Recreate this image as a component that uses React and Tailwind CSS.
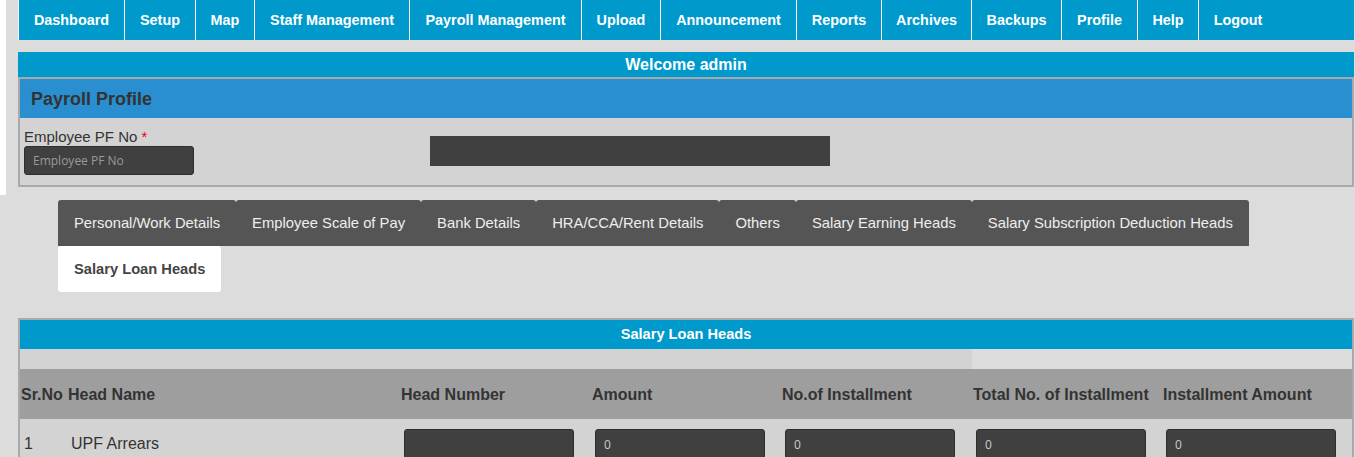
export default function App() {
  const nav = [
    { n: "Dashboard", w: "w-[106px]" },
    { n: "Setup", w: "w-[71px]" },
    { n: "Map", w: "w-[59px]" },
    { n: "Staff Management", w: "w-[155px]" },
    { n: "Payroll Management", w: "w-[172px]" },
    { n: "Upload", w: "w-[79px]" },
    { n: "Announcement", w: "w-[136px]" },
    { n: "Reports", w: "w-[85px]" },
    { n: "Archives", w: "w-[90px]" },
    { n: "Backups", w: "w-[90px]" },
    { n: "Profile", w: "w-[76px]" },
    { n: "Help", w: "w-[61px]" },
    { n: "Logout", w: "w-[79px]" },
  ];
  const tabs = [
    "Personal/Work Details",
    "Employee Scale of Pay",
    "Bank Details",
    "HRA/CCA/Rent Details",
    "Others",
    "Salary Earning Heads",
    "Salary Subscription Deduction Heads",
  ];
  const heads = [
    "Sr.No",
    "Head Name",
    "Head Number",
    "Amount",
    "No.of Installment",
    "Total No. of Installment",
    "Installment Amount",
  ];
  const inputCls =
    "h-[30px] w-[170px] rounded-[3px] border border-[#2e2e2e] bg-[#404040] px-[8px] text-[12px] text-[#cccccc] font-['Open_Sans',sans-serif] outline-none placeholder:text-[#9a9a9a]";
  return (
    <div className="min-h-[457px] bg-[#dcdcdc] font-['Liberation_Sans',Arial,sans-serif] text-[#333333]">
      <div className="flex items-start">
        <div className="h-[195px] w-[6px] shrink-0 bg-white" />
        <div className="ml-[12px] mr-[1px] min-w-0 flex-1">
          <nav className="flex h-[40px] bg-[#0099cc]">
            {nav.map((it) => (
              <a
                key={it.n}
                className={
                  "flex shrink-0 items-center justify-center whitespace-nowrap border-l border-white pt-[2px] text-[14.4px] font-bold text-white " +
                  it.w
                }
              >
                {it.n}
              </a>
            ))}
          </nav>
          <div className="mt-[12px] flex h-[25px] items-center justify-center bg-[#0099cc] pt-[1px] text-[16px] font-bold text-white">
            Welcome admin
          </div>
          <div className="border-2 border-[#a9a9a9]">
            <div className="flex h-[39px] items-center bg-[#298fd0] px-[11px] pt-[2px] text-[18px] font-bold text-[#333333]">
              Payroll Profile
            </div>
            <div className="flex h-[67px] bg-[#d3d3d3]">
              <div className="w-[410px] shrink-0 pl-[4px] pt-[10px]">
                <div className="text-[15px] leading-[17px] text-[#333333]">
                  Employee PF No <span className="text-[#ee0000]">*</span>
                </div>
                <input
                  className="mt-[1px] h-[29px] w-[170px] rounded-[3px] border border-[#2e2e2e] bg-[#404040] px-[8px] text-[12px] text-[#cccccc] font-['Open_Sans',sans-serif] outline-none placeholder:text-[#9a9a9a]"
                  placeholder="Employee PF No"
                />
              </div>
              <div className="mt-[18px] h-[30px] w-[400px] bg-[#404040]" />
            </div>
          </div>
        </div>
      </div>

      <div className="ml-[58px] mr-[58px] mt-[5px] flex flex-wrap">
        {tabs.map((t) => (
          <div
            key={t}
            className="flex h-[46px] items-center rounded-t-[3px] bg-[#555555] px-[16px] text-[14.8px] text-[#eeeeee]"
          >
            {t}
          </div>
        ))}
        <div className="flex h-[46px] items-center rounded-[3px] bg-white px-[16px] text-[14.7px] font-bold text-[#444444]">
          Salary Loan Heads
        </div>
      </div>

      <div className="ml-[18px] mr-[1px] mt-[26px] border-2 border-[#a9a9a9]">
        <div className="flex h-[29px] items-center justify-center bg-[#0099cc] pt-[1px] text-[14.6px] font-bold text-white">
          Salary Loan Heads
        </div>
        <div className="grid grid-cols-[47px_333px_191px_190px_191px_190px_190px]">
          <div className="col-span-5 h-[20px] bg-[#d3d3d3]" />
          <div className="col-span-2 h-[20px] bg-[#dcdcdc]" />
          {heads.map((h) => (
            <div
              key={h}
              className="flex h-[50px] items-center whitespace-nowrap bg-[#9e9e9e] pl-[1px] pt-[2px] text-[16px] font-bold text-[#333333]"
            >
              {h}
            </div>
          ))}
          <div className="flex h-[50px] items-center bg-[#d3d3d3] pl-[4px] text-[16px]">1</div>
          <div className="flex h-[50px] items-center bg-[#d3d3d3] pl-[4px] text-[16px]">UPF Arrears</div>
          <div className="h-[50px] bg-[#d3d3d3] pl-[4px] pt-[10px]">
            <input className={inputCls} defaultValue="" />
          </div>
          <div className="h-[50px] bg-[#d3d3d3] pl-[4px] pt-[10px]">
            <input className={inputCls} defaultValue="0" />
          </div>
          <div className="h-[50px] bg-[#d3d3d3] pl-[4px] pt-[10px]">
            <input className={inputCls} defaultValue="0" />
          </div>
          <div className="h-[50px] bg-[#d3d3d3] pl-[4px] pt-[10px]">
            <input className={inputCls} defaultValue="0" />
          </div>
          <div className="h-[50px] bg-[#d3d3d3] pl-[4px] pt-[10px]">
            <input className={inputCls} defaultValue="0" />
          </div>
        </div>
      </div>
    </div>
  );
}
